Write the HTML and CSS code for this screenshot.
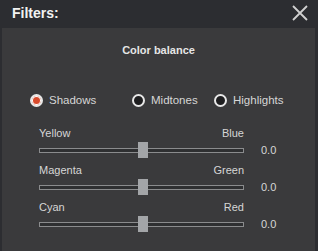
FILE: index.html
```html
<!DOCTYPE html>
<html lang="en">
<head>
  <meta charset="UTF-8">
  <title>Filters</title>
  <link rel="stylesheet" href="styles.css">
</head>
<body>
  <div class="window">
    <div class="titlebar">
      <span class="title">Filters:</span>
      <svg class="close" width="16" height="16" viewBox="0 0 16 16">
        <path d="M1 1 L15 15 M15 1 L1 15" stroke="#d0d0d0" stroke-width="1.8" fill="none"/>
      </svg>
    </div>
    <div class="panel">
      <div class="heading">Color balance</div>

      <div class="radios">
        <label class="radio checked"><span class="dot"></span>Shadows</label>
        <label class="radio"><span class="dot"></span>Midtones</label>
        <label class="radio"><span class="dot"></span>Highlights</label>
      </div>

      <div class="sliders">
        <div class="row">
          <div class="labels"><span>Yellow</span><span>Blue</span></div>
          <div class="line">
            <div class="track"><div class="thumb"></div></div>
            <span class="value">0.0</span>
          </div>
        </div>
        <div class="row">
          <div class="labels"><span>Magenta</span><span>Green</span></div>
          <div class="line">
            <div class="track"><div class="thumb"></div></div>
            <span class="value">0.0</span>
          </div>
        </div>
        <div class="row">
          <div class="labels"><span>Cyan</span><span>Red</span></div>
          <div class="line">
            <div class="track"><div class="thumb"></div></div>
            <span class="value">0.0</span>
          </div>
        </div>
      </div>
    </div>
  </div>
</body>
</html>
```

FILE: styles.css
```css
* { margin: 0; padding: 0; box-sizing: border-box; }
body {
  font-family: "Liberation Sans", Arial, sans-serif;
  background-color: #2c2d31;
  color: #d6d6d6;
  font-size: 11px;
}

.window {
  width: 318px;
  height: 251px;
  display: flex;
  flex-direction: column;
  background-color: #2c2d31;
}

/* Barra de titulo */
.titlebar {
  height: 28px;
  display: flex;
  align-items: center;
  justify-content: space-between;
  padding: 0 10px 2px 12px;
}
.title {
  color: #f2f2f2;
  font-weight: bold;
  font-size: 14px;
}
.close { display: block; }

/* Panel */
.panel {
  flex: 1;
  margin: 0 3px 0 2px;
  background-color: #3a3a3c;
  padding-top: 16px;
}
.heading {
  text-align: center;
  font-weight: bold;
  font-size: 11px;
  color: #e6e6e6;
}

.radios {
  display: flex;
  padding-left: 28px;
  margin-top: 36px;
  height: 16px;
  align-items: center;
}
.radio {
  display: flex;
  align-items: center;
  gap: 6px;
  font-size: 11.5px;
}
.radio:nth-child(1) { width: 102px; }
.radio:nth-child(2) { width: 82px; }
.dot {
  width: 13px;
  height: 13px;
  border-radius: 50%;
  border: 2px solid #e8e8e8;
  background-color: #1e1e20;
}
.radio.checked .dot {
  background-color: #d84a2c;
  box-shadow: inset 0 0 0 1px #ffffff;
}

/* Sliders */
.sliders {
  margin-top: 19px;
  padding-left: 37px;
}
.row { height: 37px; }
.labels {
  width: 205px;
  display: flex;
  justify-content: space-between;
  height: 15px;
}
.line {
  display: flex;
  align-items: center;
  height: 16px;
}
.track {
  position: relative;
  width: 205px;
  height: 5px;
  border: 1px solid #8a8b8d;
  background-color: #2e2f31;
}
.thumb {
  position: absolute;
  left: 98px;
  top: -7px;
  width: 10px;
  height: 16px;
  background-color: #a3a5a8;
}
.value {
  margin-left: 17px;
  line-height: 16px;
  color: #d6d6d6;
}
```
